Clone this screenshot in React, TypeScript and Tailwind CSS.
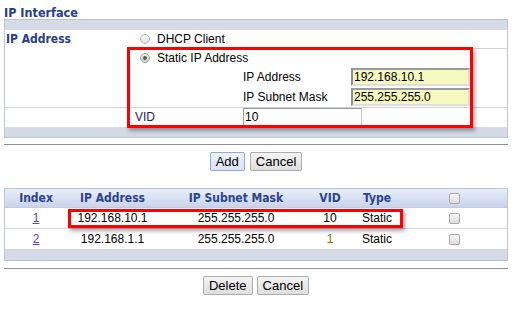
import React from "react";

const bold = "font-['DejaVu_Sans_Condensed','DejaVu_Sans',sans-serif] [font-stretch:condensed] font-bold";

function Radio({ checked }: { checked?: boolean }) {
  return (
    <div
      className={`w-[10px] h-[10px] rounded-full border flex items-center justify-center ${
        checked
          ? "border-[#9c9c9c] bg-linear-to-b from-[#ececec] to-[#d2d2d2]"
          : "border-[#b6b6b6] bg-linear-to-b from-[#f8f8f8] to-[#e0e0e0]"
      }`}
    >
      {checked && <div className="w-[4px] h-[4px] rounded-full bg-[#5a5a5a]" />}
    </div>
  );
}

function Check() {
  return (
    <div className="mx-auto w-[11px] h-[11px] rounded-[2px] border border-[#a9a9a9] bg-linear-to-b from-[#f6f6f6] to-[#dcdcdc]" />
  );
}

function YInput({ value }: { value: string }) {
  return (
    <input
      readOnly
      value={value}
      className="w-[119px] h-[18px] p-0 pl-[1px] border-2 border-t-[#9a9a9a] border-l-[#8e8e8e] border-r-[#dedede] border-b-[#dedede] bg-[#f5f8bf] text-[12px] text-black outline-none font-['Liberation_Sans',Arial,sans-serif]"
    />
  );
}

function Btn({ label, focus }: { label: string; focus?: boolean }) {
  return (
    <button
      className={`h-[19px] px-[5px] border rounded-[2px] text-[13px] leading-none text-black font-['Liberation_Sans',Arial,sans-serif] ${
        focus
          ? "border-[#8ea6e2] bg-linear-to-b from-[#eef2fa] to-[#dde3f0]"
          : "border-[#acacac] bg-linear-to-b from-[#f4f4f4] to-[#dedede]"
      }`}
    >
      {label}
    </button>
  );
}

const cols = "grid grid-cols-[62px_91px_156px_32px_62px_92px_1fr] items-center text-center";

export default function App() {
  return (
    <div className="relative w-[521px] h-[315px] bg-white overflow-hidden font-['Liberation_Sans',Arial,sans-serif] text-[12px] text-black">
      <div className={`h-[19px] pl-[4px] pt-[5px] leading-[15px] text-[12.5px] text-[#263c8e] ${bold}`}>
        IP Interface
      </div>

      <div className="ml-[4px] w-[504px] border border-[#bcc3d1]">
        <div className="h-[10px] bg-[#d5dbe6]" />
        <div className="flex">
          <div className={`w-[129px] pl-[1px] h-[18px] flex items-center text-[12px] text-[#293d8c] ${bold}`}>
            IP Address
          </div>
          <div className="flex-1">
            <div className="h-[18px] flex items-center pl-[6px]">
              <Radio />
              <span className="ml-[7px]">DHCP Client</span>
            </div>
            <div className="h-px bg-[#cdd2dc]" />
            <div className="h-[18px] flex items-center pl-[6px]">
              <Radio checked />
              <span className="ml-[7px]">Static IP Address</span>
            </div>
            <div className="h-[20px] flex items-center">
              <div className="w-[109px]" />
              <div className="w-[108px]">IP Address</div>
              <YInput value="192.168.10.1" />
            </div>
            <div className="h-[20px] flex items-center">
              <div className="w-[109px]" />
              <div className="w-[108px]">IP Subnet Mask</div>
              <YInput value="255.255.255.0" />
            </div>
          </div>
        </div>
        <div className="h-px bg-[#cdd2dc]" />
        <div className="h-[19px] flex items-start">
          <div className="w-[130px]" />
          <div className="w-[108px] h-[18px] flex items-center text-[#1c2352]">VID</div>
          <input
            readOnly
            value="10"
            className="w-[119px] h-[18px] p-0 pl-[1px] border border-t-[#9a9a9a] border-l-[#9a9a9a] border-r-[#c8c8c8] border-b-[#c8c8c8] bg-white text-[12px] text-black outline-none font-['Liberation_Sans',Arial,sans-serif]"
          />
        </div>
        <div className="h-[10px] bg-[#d5dbe6]" />
      </div>

      <div className="ml-[4px] w-[504px] h-px bg-[#8f8f8f] mt-[6px]" />
      <div className="ml-[4px] w-[504px] mt-[7px] flex justify-center gap-[5px]">
        <Btn label="Add" focus />
        <Btn label="Cancel" />
      </div>

      <div className="ml-[4px] w-[504px] mt-[17px] border border-[#bcc3d1]">
        <div className={`${cols} h-[19px] border-b border-[#c3cde0] bg-linear-to-b from-[#e8eef9] to-[#c8d4ec] text-[12px] text-[#2c438c] ${bold}`}>
          <div>Index</div>
          <div>IP Address</div>
          <div>IP Subnet Mask</div>
          <div>VID</div>
          <div>Type</div>
          <div><Check /></div>
          <div />
        </div>
        <div className={`${cols} h-[21px] border-b border-[#d0d5de]`}>
          <div className="text-[#5b3fc4] underline">1</div>
          <div>192.168.10.1</div>
          <div>255.255.255.0</div>
          <div>10</div>
          <div>Static</div>
          <div><Check /></div>
          <div />
        </div>
        <div className={`${cols} h-[21px] border-b border-[#d0d5de]`}>
          <div className="text-[#5b3fc4] underline">2</div>
          <div>192.168.1.1</div>
          <div>255.255.255.0</div>
          <div className="text-[#9a6a00]">1</div>
          <div>Static</div>
          <div><Check /></div>
          <div />
        </div>
        <div className="h-[10px] bg-[#d5dbe6]" />
      </div>

      <div className="ml-[4px] w-[504px] h-px bg-[#8f8f8f] mt-[7px]" />
      <div className="ml-[4px] w-[504px] mt-[7px] flex justify-center gap-[4px]">
        <Btn label="Delete" />
        <Btn label="Cancel" />
      </div>

      <div className="absolute left-[127px] top-[47px] w-[346px] h-[81px] border-[3px] border-[#f00] shadow-[2px_3px_4px_rgba(0,0,0,0.35)]" />
      <div className="absolute left-[68px] top-[209px] w-[335px] h-[19px] border-[3px] border-[#f00] shadow-[2px_3px_4px_rgba(0,0,0,0.35)]" />
    </div>
  );
}
